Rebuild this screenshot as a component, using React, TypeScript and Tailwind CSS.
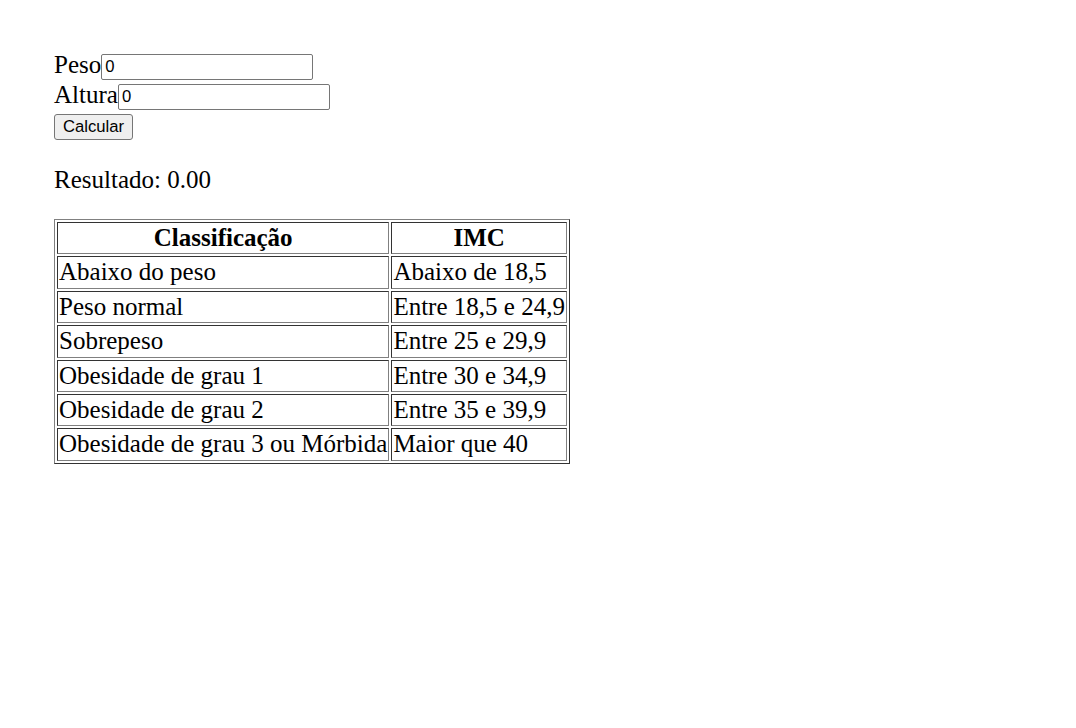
const faixas = [
  { classe: 'Abaixo do peso', imc: 'Abaixo de 18,5' },
  { classe: 'Peso normal', imc: 'Entre 18,5 e 24,9' },
  { classe: 'Sobrepeso', imc: 'Entre 25 e 29,9' },
  { classe: 'Obesidade de grau 1', imc: 'Entre 30 e 34,9' },
  { classe: 'Obesidade de grau 2', imc: 'Entre 35 e 39,9' },
  { classe: 'Obesidade de grau 3 ou Mórbida', imc: 'Maior que 40' },
]

const cell =
  'border border-t-[#333333] border-l-[#333333] border-b-[#808080] border-r-[#808080] p-px leading-[28.4px]'

const input =
  'mt-[3px] h-[26px] w-[212px] rounded-[2px] border border-[#767676] px-[3px] py-px text-[16.67px]'

export default function App() {
  return (
    <div
      className="min-h-screen bg-white pl-[54px] pt-[51px] text-[25px] text-black"
      style={{ fontFamily: '"Liberation Serif", "Times New Roman", serif' }}
    >
      <div className="flex h-[30px] items-start">
        <label className="leading-[27px]">Peso</label>
        <input
          defaultValue="0"
          className={input}
          style={{ fontFamily: '"Liberation Sans", Arial, sans-serif' }}
        />
      </div>
      <div className="flex h-[30px] items-start">
        <label className="leading-[27px]">Altura</label>
        <input
          defaultValue="0"
          className={input}
          style={{ fontFamily: '"Liberation Sans", Arial, sans-serif' }}
        />
      </div>
      <div className="mt-[3px] flex">
        <button
          className="h-[26px] rounded-[3px] border border-[#767676] bg-[#efefef] px-[8px] text-[16.67px] leading-none"
          style={{ fontFamily: '"Liberation Sans", Arial, sans-serif' }}
        >
          Calcular
        </button>
      </div>
      <p className="mt-[26px] mb-[25px] leading-[28px]">Resultado: 0.00</p>
      <table className="border-separate border-spacing-[2px] border border-t-[#808080] border-l-[#808080] border-b-[#333333] border-r-[#333333]">
        <thead>
          <tr>
            <th className={`${cell} text-center font-bold`}>Classificação</th>
            <th className={`${cell} text-center font-bold`}>IMC</th>
          </tr>
        </thead>
        <tbody>
          {faixas.map((f) => (
            <tr key={f.classe}>
              <td className={`${cell} whitespace-nowrap`}>{f.classe}</td>
              <td className={`${cell} whitespace-nowrap`}>{f.imc}</td>
            </tr>
          ))}
        </tbody>
      </table>
    </div>
  )
}
